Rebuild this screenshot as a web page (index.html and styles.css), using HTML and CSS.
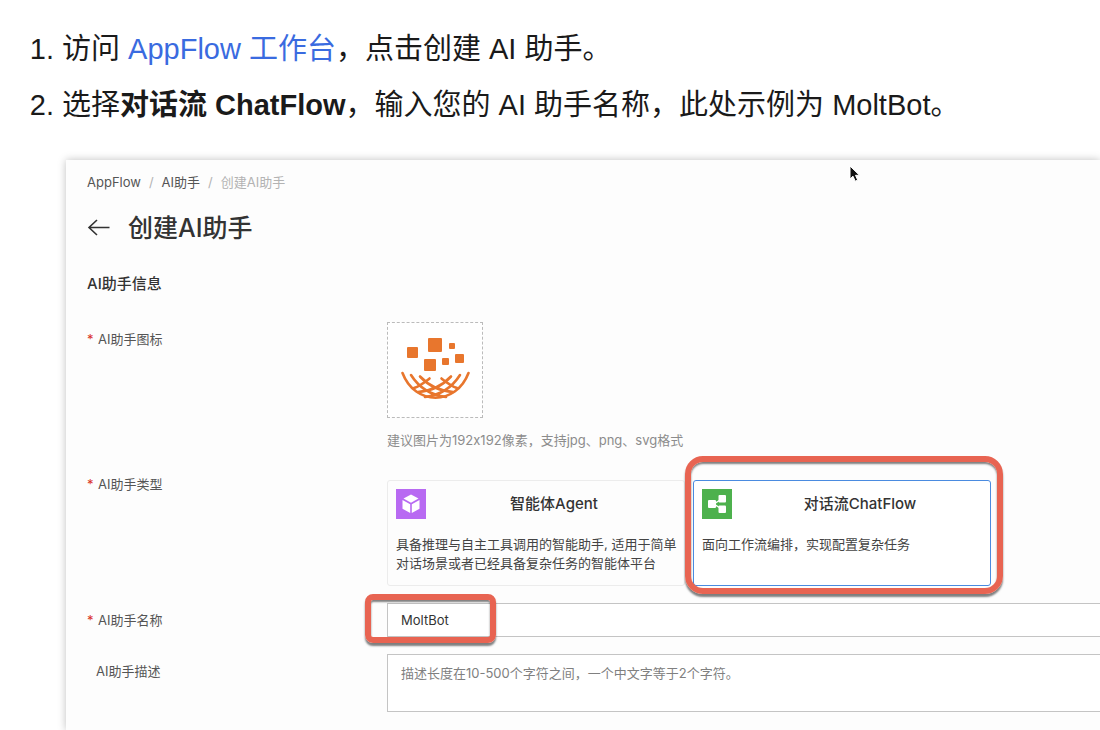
FILE: index.html
```html
<!DOCTYPE html>
<html lang="zh-CN">
<head>
<meta charset="utf-8">
<meta name="viewport" content="width=device-width, initial-scale=1">
<title>创建 AI 助手</title>
<link rel="stylesheet" href="styles.css">
</head>
<body>
<ol class="steps">
  <li>访问 <a class="steps-link" href="#">AppFlow 工作台</a>，点击创建 AI 助手。</li>
  <li>选择<strong>对话流 ChatFlow</strong>，输入您的 AI 助手名称，此处示例为 MoltBot。</li>
</ol>
<main class="panel">
  <nav class="crumbs" aria-label="breadcrumb">
    <a href="#">AppFlow</a><span class="slash">/</span><a href="#">AI助手</a><span class="slash">/</span><span class="current">创建AI助手</span>
  </nav>
  <header class="heading">
    <button class="back" type="button" aria-label="返回">
      <svg width="23" height="18" viewBox="0 0 23 18" fill="none" stroke="#333" stroke-width="1.6"><path d="M10 1 2 8.500 10 16M2 8.500H22.500"/></svg>
    </button>
    <h1>创建AI助手</h1>
  </header>
  <h2>AI助手信息</h2>
  <form class="form">
    <div class="row row-icon">
      <span class="label required" id="icon-label">AI助手图标</span>
      <div>
        <button class="upload" type="button" aria-labelledby="icon-label">
          <svg width="70" height="64" viewBox="0 0 70 64" fill="#e8762d">
            <rect x="7" y="11" width="11" height="11" rx="1"/>
            <rect x="28" y="2" width="14" height="14" rx="1"/>
            <rect x="49" y="7" width="6" height="6" rx="1"/>
            <rect x="24" y="23" width="12" height="12" rx="1"/>
            <rect x="42" y="22" width="7" height="7" rx="1"/>
            <rect x="55" y="18" width="9" height="9" rx="1"/>
            <g fill="none" stroke="#e8762d" stroke-width="2.6" stroke-linecap="round">
              <path d="M2.500 37C15 70 56 70 68.500 37"/>
              <path d="M11 39C18 50 29 59 46 61M60 39C53 50 42 59 25 61"/>
              <path d="M20 40.500C28 49 39 55 53 56M51 40.500C43 49 32 55 18 56"/>
              <path d="M29.500 42.500C25 46 20 50 14 52M41.500 42.500C46 46 51 50 57 52"/>
            </g>
          </svg>
        </button>
        <p class="hint">建议图片为192x192像素，支持jpg、png、svg格式</p>
      </div>
    </div>
    <div class="row row-type" role="radiogroup" aria-labelledby="type-label">
      <span class="label required" id="type-label">AI助手类型</span>
      <div class="cards">
        <label class="card">
          <input type="radio" name="type" value="agent">
          <span class="card-head">
            <svg width="30" height="30" viewBox="0 0 30 30"><path fill="#b86af2" d="M0 0h30v30H0z"/><g fill="#fff"><path d="m15 5.500 7.500 4-7.500 4.200-7.500-4.200z"/><path d="m6.500 11 7.700 4.300v8.700l-7.700-4.300zM23.500 11l-7.700 4.300v8.700l7.700-4.300z"/></g></svg>
            <span class="card-title">智能体Agent</span>
          </span>
          <span class="card-text">具备推理与自主工具调用的智能助手, 适用于简单<br>对话场景或者已经具备复杂任务的智能体平台</span>
        </label>
        <label class="card selected">
          <input type="radio" name="type" value="chatflow" checked>
          <span class="card-head">
            <svg width="30" height="30" viewBox="0 0 30 30"><path fill="#4db14d" d="M0 0h30v30H0z"/><g fill="#fff"><rect x="6" y="11" width="8" height="8" rx="1"/><rect x="16.500" y="6" width="7.500" height="7.500" rx="1"/><rect x="16.500" y="16.500" width="7.500" height="7.500" rx="1"/></g><path d="M18 11 12 15l6 4" fill="none" stroke="#fff" stroke-width="1.500"/></svg>
            <span class="card-title">对话流ChatFlow</span>
          </span>
          <span class="card-text">面向工作流编排，实现配置复杂任务</span>
          <span class="mark mark-card"></span>
        </label>
      </div>
    </div>
    <div class="row row-name">
      <label class="label required" for="name">AI助手名称</label>
      <div class="field">
        <input class="control" id="name" type="text" value="MoltBot">
        <span class="mark mark-name"></span>
      </div>
    </div>
    <div class="row row-desc">
      <label class="label optional" for="desc">AI助手描述</label>
      <textarea class="control area" id="desc" placeholder="描述长度在10-500个字符之间，一个中文字等于2个字符。"></textarea>
    </div>
  </form>
  <svg class="pointer" width="12" height="18" viewBox="0 0 12 18"><path d="M1 1v13l3-2.800 2.200 5 2.500-1.100-2.200-4.800h4z" fill="#111" stroke="#fff"/></svg>
</main>
</body>
</html>
```
FILE: styles.css
```css
* { box-sizing: border-box; }

body {
  margin: 0;
  min-height: 100vh;
  display: flex;
  flex-direction: column;
  overflow-x: hidden;
  background: #fff;
  color: #1a1a1a;
  font-family: "Liberation Sans", "Noto Sans CJK SC", sans-serif;
}

.steps {
  margin: 0;
  padding: 21px 0 27px 62px;
  font-size: 29px;
  line-height: 56px;
}
.steps-link { color: #3a6be0; text-decoration: none; }

.panel {
  position: relative;
  flex: 1;
  margin-left: 66px;
  padding: 12px 0 16px 21px;
  background: #fdfdfd;
  box-shadow: 0 0 8px rgba(0, 0, 0, 0.25);
  color: #333;
  font: 13px/20px Inter, "Noto Sans CJK SC", sans-serif;
}

.crumbs { display: flex; gap: 8px; }
.crumbs a { color: #555; text-decoration: none; }
.crumbs .slash, .crumbs .current { color: #b3b3b3; }

.heading {
  display: flex;
  align-items: center;
  gap: 18px;
  margin-top: 18px;
}
.back {
  display: flex;
  padding: 0;
  border: 0;
  background: none;
}
h1 { margin: 0; font-size: 25px; font-weight: 500; line-height: 36px; }
h2 { margin: 28px 0 0; font-size: 15px; font-weight: 500; line-height: 20px; }

.form { margin-top: 28px; }
.row {
  display: grid;
  grid-template-columns: 300px minmax(0, 1fr);
  align-items: start;
}
.label { color: #555; }
.required::before {
  content: "*";
  display: inline-block;
  width: 11px;
  color: #d93026;
}
.optional { padding-left: 9px; }
.row-icon .label { padding-top: 7px; }
.row-type { margin-top: 24px; }
.row-name { margin-top: 17px; }
.row-name .label, .row-desc .label { padding-top: 7px; }
.row-desc { margin-top: 17px; }

.upload {
  display: flex;
  align-items: center;
  justify-content: center;
  width: 96px;
  height: 96px;
  padding: 0 0 4px;
  border: 1px dashed #bbb;
  background: #fff;
}
.hint { margin: 12px 0 0; color: #8c8c8c; }

.cards { display: flex; gap: 8px; padding-top: 6px; }
.card {
  position: relative;
  width: 298px;
  min-height: 106px;
  padding: 8px;
  border: 1px solid #ececec;
  border-radius: 3px;
}
.card input {
  position: absolute;
  opacity: 0;
}
.card.selected { border-color: #4a8be0; background: #fff; }
.card-head { display: flex; align-items: center; }
.card-title {
  flex: 1;
  padding-left: 6px;
  text-align: center;
  font-size: 15px;
  font-weight: 500;
}
.card-text {
  display: block;
  margin-top: 16px;
  line-height: 19px;
  white-space: nowrap;
  color: #444;
}

.field { position: relative; }
.control {
  display: block;
  width: 100%;
  height: 34px;
  margin: 0;
  padding: 0 13px;
  border: 1px solid #c4c4c4;
  border-right: 0;
  border-radius: 0;
  background: #fff;
  color: #333;
  font: inherit;
  outline: 0;
}
.area { height: 58px; padding-top: 8px; resize: none; }
.control::placeholder { color: #808080; opacity: 1; }

.mark {
  position: absolute;
  border: 6px solid #e86452;
  box-shadow: 0 3px 2px rgba(0, 0, 0, 0.5), inset 0 2px 2px rgba(0, 0, 0, 0.5);
  pointer-events: none;
}
.mark-card { inset: -25px -13px -9px -9px; border-radius: 18px; }
.mark-name { top: -9px; left: -22px; width: 131px; height: 49px; border-radius: 8px; }

.pointer { position: absolute; top: 5px; left: 783px; }
```
